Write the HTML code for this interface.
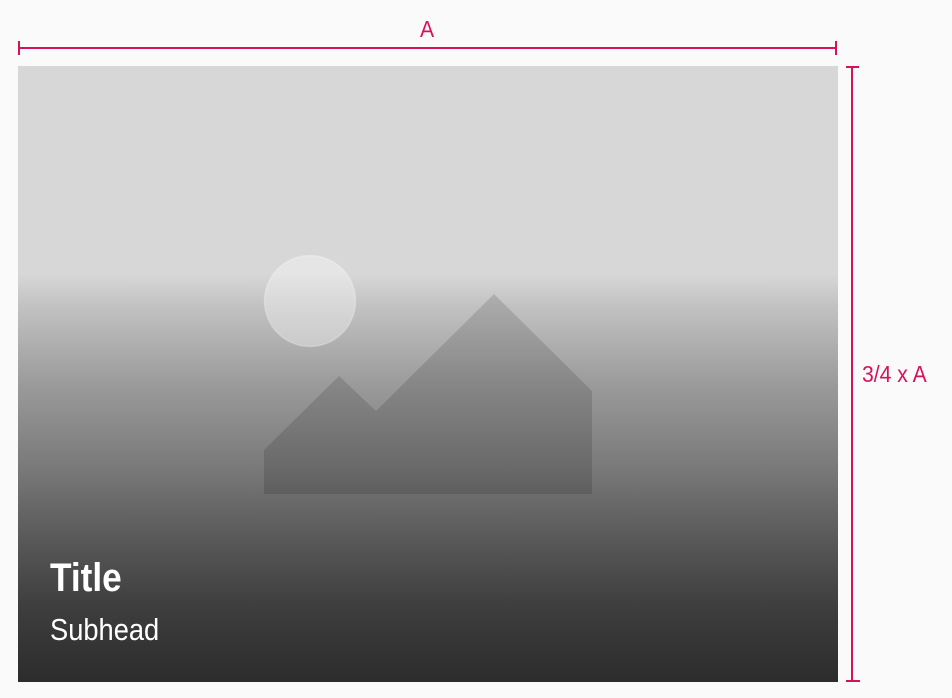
<!DOCTYPE html>
<html><head><style>
html,body{margin:0;padding:0;background:#fafafa;width:952px;height:698px;overflow:hidden;position:relative;font-family:"Liberation Sans",sans-serif}
.card{position:absolute;left:18px;top:66px;width:820px;height:616px;background:linear-gradient(to bottom,#d7d7d7 0px,#d7d7d7 208px,#c2c2c2 240px,#9a9a9a 320px,#7a7a7a 400px,#5a5a5a 470px,#3e3e3e 540px,#2c2c2c 616px)}
.m{position:absolute;background:#d6135a}
.lbl{position:absolute;color:#d6135a;font-size:23px;transform:scaleX(0.92);transform-origin:left top;white-space:nowrap}
.t{position:absolute;color:#fff;transform:scaleX(0.88);transform-origin:left top;white-space:nowrap}
</style></head><body>
<div class="m" style="left:18px;top:47px;width:819px;height:2px"></div>
<div class="m" style="left:18px;top:41px;width:2px;height:14px"></div>
<div class="m" style="left:835px;top:41px;width:2px;height:14px"></div>
<div class="lbl" style="left:420px;top:16px">A</div>
<div class="m" style="left:851px;top:67px;width:2px;height:615px"></div>
<div class="m" style="left:846px;top:66px;width:13px;height:2px"></div>
<div class="m" style="left:846px;top:680px;width:14px;height:2px"></div>
<div class="lbl" style="left:862px;top:361px">3/4 x A</div>
<div class="card">
<svg width="820" height="616" style="position:absolute;left:0;top:0">
<circle cx="292" cy="235" r="45.5" fill="rgba(255,255,255,0.35)" stroke="rgba(255,255,255,0.25)" stroke-width="1.5"/>
<polygon points="246,384 321,310 358,345 476,228 574,325 574,428 246,428" fill="rgba(0,0,0,0.13)"/>
</svg>
<div class="t" style="left:32px;top:490px;font-size:40px;font-weight:bold">Title</div>
<div class="t" style="left:32px;top:546px;font-size:31px">Subhead</div>
</div>
</body></html>
